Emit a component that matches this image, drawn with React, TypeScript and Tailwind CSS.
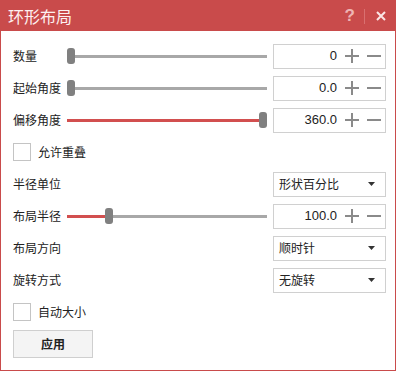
import React from 'react';

const font = { fontFamily: '"Noto Sans CJK SC", "Liberation Sans", sans-serif' };

function Slider({ pct, active }: { pct: number; active: boolean }) {
  return (
    <div className="relative flex-1 h-[16px] flex items-center">
      <div className="absolute left-0 right-0 h-[3px] bg-[#a8a8a8]" />
      {active && (
        <div className="absolute left-0 h-[3px] bg-[#d24f4f]" style={{ width: `${pct}%` }} />
      )}
      <div
        className="absolute w-[8px] h-[16px] rounded-[3px] bg-[#808080]"
        style={{ left: `calc(${pct}% - ${pct === 0 ? 0 : pct === 100 ? 8 : 4}px)` }}
      />
    </div>
  );
}

function NumberBox({ value }: { value: string }) {
  return (
    <div className="w-[113px] h-[25px] border border-[#d0d0d0] bg-white flex items-center justify-end pr-[4px]">
      <span className="text-[13px] text-[#222] mr-[8px]" style={{ fontFamily: '"Liberation Sans", sans-serif' }}>
        {value}
      </span>
      <svg width="14" height="14" viewBox="0 0 14 14" className="mr-[8px]">
        <rect x="6" y="0" width="2" height="14" fill="#8a8a8a" />
        <rect x="0" y="6" width="14" height="2" fill="#8a8a8a" />
      </svg>
      <svg width="14" height="14" viewBox="0 0 14 14">
        <rect x="0" y="6" width="14" height="2" fill="#8a8a8a" />
      </svg>
    </div>
  );
}

function Dropdown({ value }: { value: string }) {
  return (
    <div className="w-[113px] h-[25px] border border-[#d0d0d0] bg-white flex items-center justify-between pl-[5px] pr-[10px]">
      <span className="text-[12px] text-[#222]">{value}</span>
      <svg width="7" height="4" viewBox="0 0 7 4">
        <polygon points="0,0 7,0 3.5,4" fill="#333" />
      </svg>
    </div>
  );
}

function Label({ children }: { children: React.ReactNode }) {
  return <span className="w-[54px] shrink-0 text-[12px] text-[#222]">{children}</span>;
}

function SliderRow({ label, pct, active, value }: { label: string; pct: number; active: boolean; value: string }) {
  return (
    <div className="h-[32px] flex items-center">
      <Label>{label}</Label>
      <Slider pct={pct} active={active} />
      <div className="ml-[6px]">
        <NumberBox value={value} />
      </div>
    </div>
  );
}

function SelectRow({ label, value }: { label: string; value: string }) {
  return (
    <div className="h-[32px] flex items-center justify-between">
      <Label>{label}</Label>
      <Dropdown value={value} />
    </div>
  );
}

function CheckRow({ label }: { label: string }) {
  return (
    <div className="h-[32px] flex items-center">
      <div className="w-[18px] h-[18px] border border-[#c4c4c4] bg-white" />
      <span className="ml-[7px] text-[12px] text-[#222]">{label}</span>
    </div>
  );
}

export default function App() {
  return (
    <div className="w-[400px] h-[372px] bg-white" style={font}>
      <div className="w-[396px] h-[371px] border border-[#c94b4b] bg-white flex flex-col">
        {/* 标题栏 */}
        <div className="h-[30px] bg-[#c94b4b] flex items-center pl-[7px] pr-[7px] shrink-0">
          <span className="text-[16px] text-[#fdf0f0] flex-1">环形布局</span>
          <span className="text-[17px] font-bold text-[#eeb4b4] mr-[9px]" style={{ fontFamily: '"Liberation Sans", sans-serif' }}>?</span>
          <div className="w-px h-[15px] bg-[#d97070] mr-[11px]" />
          <svg width="10" height="10" viewBox="0 0 10 10" className="mr-[2px]">
            <path d="M1 1 L9 9 M9 1 L1 9" stroke="#fbe6e6" strokeWidth="2" />
          </svg>
        </div>

        {/* 内容 */}
        <div className="flex flex-col pl-[12px] pr-[9px] pt-[9px]">
          <SliderRow label="数量" pct={0} active={false} value="0" />
          <SliderRow label="起始角度" pct={0} active={false} value="0.0" />
          <SliderRow label="偏移角度" pct={100} active={true} value="360.0" />
          <CheckRow label="允许重叠" />
          <SelectRow label="半径单位" value="形状百分比" />
          <SliderRow label="布局半径" pct={21} active={true} value="100.0" />
          <SelectRow label="布局方向" value="顺时针" />
          <SelectRow label="旋转方式" value="无旋转" />
          <CheckRow label="自动大小" />
          <div className="h-[32px] flex items-center">
            <button className="w-[80px] h-[28px] border border-[#cfcfcf] bg-[#f4f4f4] text-[12px] font-bold text-[#222]">
              应用
            </button>
          </div>
        </div>
      </div>
    </div>
  );
}
